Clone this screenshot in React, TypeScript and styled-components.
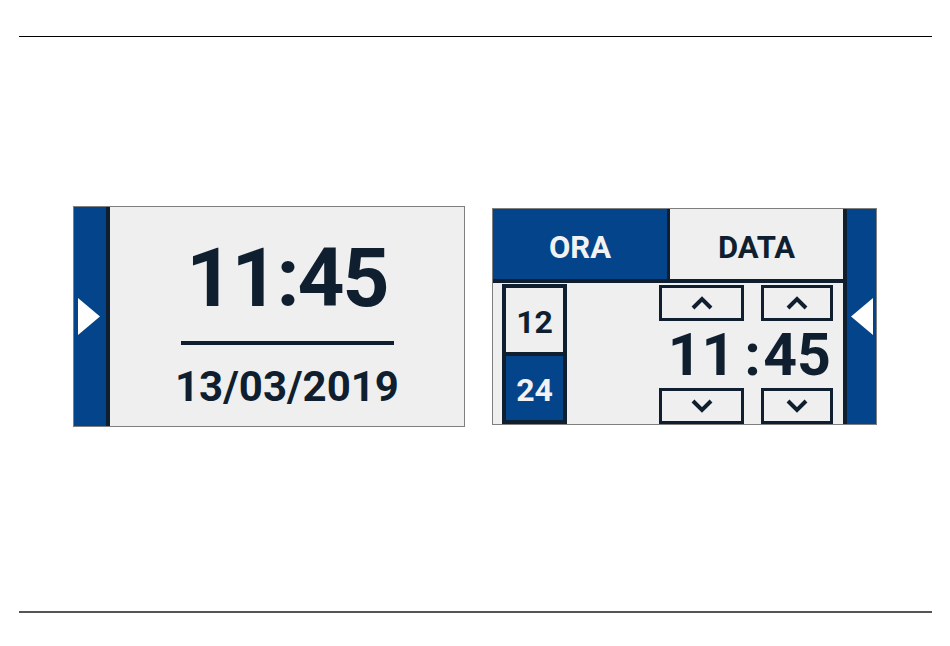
import styled, { createGlobalStyle } from "styled-components";

const BLUE = "#03448a";
const DARK = "#0f1f2f";
const LIGHT = "#efefef";

const GlobalStyle = createGlobalStyle`
  body {
    margin: 0;
    background: #ffffff;
    font-family: Roboto, "Liberation Sans", sans-serif;
  }
`;

const Page = styled.div`
  width: 950px;
  height: 646px;
  box-sizing: border-box;
  padding: 36px 18px 0 19px;
`;

const TopRule = styled.div`
  height: 1px;
  background: #000;
`;

const BottomRule = styled.div`
  height: 2px;
  background: #555;
`;

const Stage = styled.div`
  height: 574px;
  box-sizing: border-box;
  display: flex;
  align-items: flex-start;
  gap: 27px;
  padding: 169px 0 0 54px;
`;

const Panel = styled.div<{ $w: number; $h: number; $top?: number }>`
  width: ${(p) => p.$w}px;
  height: ${(p) => p.$h}px;
  margin-top: ${(p) => p.$top || 0}px;
  box-sizing: border-box;
  border: 1px solid #7f7f7f;
  display: flex;
  background: ${LIGHT};
`;

const SideBar = styled.div<{ $w: number; $side: "left" | "right" }>`
  width: ${(p) => p.$w}px;
  flex-shrink: 0;
  box-sizing: border-box;
  background: ${BLUE};
  border-${(p) => (p.$side === "left" ? "right" : "left")}: 4px solid ${DARK};
  display: flex;
  align-items: center;
  justify-content: ${(p) => (p.$side === "left" ? "flex-start" : "flex-end")};
  padding: ${(p) => (p.$side === "left" ? "0 0 0 4px" : "0 3px 0 0")};
`;

const Summary = styled.div`
  flex: 1;
  display: flex;
  flex-direction: column;
  align-items: center;
  padding-top: 30px;
  color: ${DARK};
`;

const BigTime = styled.div`
  font-size: 82px;
  font-weight: 700;
  line-height: 1;
  letter-spacing: -2px;
`;

const Divider = styled.div`
  width: 213px;
  height: 4px;
  background: ${DARK};
  margin: 22px 0 21px;
`;

const DateText = styled.div`
  font-size: 42px;
  font-weight: 700;
  line-height: 1;
`;

const Main = styled.div`
  flex: 1;
  display: flex;
  flex-direction: column;
`;

const Tabs = styled.div`
  display: flex;
  height: 74px;
  box-sizing: border-box;
  border-bottom: 4px solid ${DARK};
`;

const Tab = styled.div<{ $active?: boolean }>`
  width: ${(p) => (p.$active ? "177px" : "auto")};
  flex: ${(p) => (p.$active ? "none" : "1")};
  box-sizing: border-box;
  border-right: ${(p) => (p.$active ? `3px solid ${DARK}` : "none")};
  background: ${(p) => (p.$active ? BLUE : LIGHT)};
  color: ${(p) => (p.$active ? "#f2f2f2" : DARK)};
  display: flex;
  align-items: center;
  justify-content: center;
  padding-top: 6px;
  font-size: 31px;
  font-weight: 700;
  line-height: 1;
`;

const Body = styled.div`
  flex: 1;
  display: flex;
  justify-content: space-between;
  padding: 0 10px 0 9px;
`;

const FormatColumn = styled.div`
  margin-top: 1px;
  width: 65px;
  height: 140px;
  box-sizing: border-box;
  border: 4px solid ${DARK};
  display: flex;
  flex-direction: column;
`;

const FormatCell = styled.div<{ $on?: boolean }>`
  height: ${(p) => (p.$on ? 64 : 68)}px;
  box-sizing: border-box;
  border-bottom: ${(p) => (p.$on ? "none" : `4px solid ${DARK}`)};
  background: ${(p) => (p.$on ? BLUE : LIGHT)};
  color: ${(p) => (p.$on ? "#f2f2f2" : DARK)};
  display: flex;
  align-items: center;
  justify-content: center;
  padding-top: 4px;
  font-size: 32px;
  font-weight: 700;
  line-height: 1;
`;

const Editor = styled.div`
  margin-top: 2px;
  display: grid;
  grid-template-columns: 85px 17px 72px;
  grid-template-rows: 36px 67px 36px;
  align-items: center;
  justify-items: center;
  color: ${DARK};
`;

const StepButton = styled.div`
  width: 100%;
  height: 36px;
  box-sizing: border-box;
  border: 3px solid ${DARK};
  background: ${LIGHT};
  display: flex;
  align-items: center;
  justify-content: center;
`;

const Digits = styled.div`
  font-size: 59px;
  font-weight: 700;
  line-height: 1;
`;

const Gap = styled.div``;

function Arrow({ dir }: { dir: "left" | "right" }) {
  return (
    <svg width="22" height="37" viewBox="0 0 22 37">
      <polygon
        points={dir === "right" ? "0,0 22,18.5 0,37" : "22,0 0,18.5 22,37"}
        fill="#ffffff"
      />
    </svg>
  );
}

function Chevron({ up }: { up?: boolean }) {
  return (
    <svg width="22" height="14" viewBox="0 0 22 14">
      <polyline
        points={up ? "2,12 11,3 20,12" : "2,2 11,11 20,2"}
        fill="none"
        stroke={DARK}
        strokeWidth="4"
      />
    </svg>
  );
}

export default function App() {
  return (
    <Page>
      <GlobalStyle />
      <TopRule />
      <Stage>
        <Panel $w={392} $h={221}>
          <SideBar $w={36} $side="left">
            <Arrow dir="right" />
          </SideBar>
          <Summary>
            <BigTime>11:45</BigTime>
            <Divider />
            <DateText>13/03/2019</DateText>
          </Summary>
        </Panel>

        <Panel $w={385} $h={217} $top={2}>
          <Main>
            <Tabs>
              <Tab $active>ORA</Tab>
              <Tab>DATA</Tab>
            </Tabs>
            <Body>
              <FormatColumn>
                <FormatCell>12</FormatCell>
                <FormatCell $on>24</FormatCell>
              </FormatColumn>
              <Editor>
                <StepButton>
                  <Chevron up />
                </StepButton>
                <Gap />
                <StepButton>
                  <Chevron up />
                </StepButton>
                <Digits>11</Digits>
                <Digits>:</Digits>
                <Digits>45</Digits>
                <StepButton>
                  <Chevron />
                </StepButton>
                <Gap />
                <StepButton>
                  <Chevron />
                </StepButton>
              </Editor>
            </Body>
          </Main>
          <SideBar $w={33} $side="right">
            <Arrow dir="left" />
          </SideBar>
        </Panel>
      </Stage>
      <BottomRule />
    </Page>
  );
}
